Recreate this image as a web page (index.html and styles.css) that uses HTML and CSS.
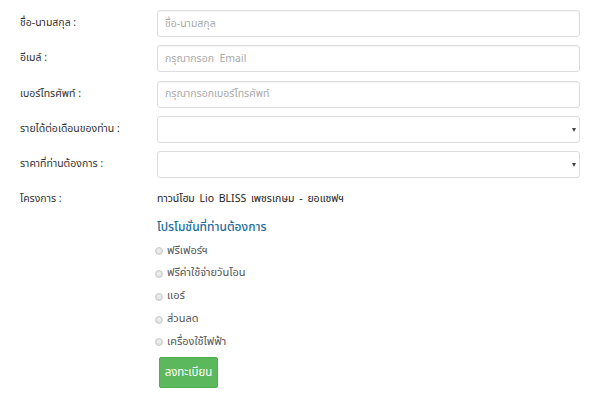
FILE: index.html
```html
<!DOCTYPE html>
<html lang="th">
<head>
    <meta charset="UTF-8">
    <meta name="viewport" content="width=device-width, initial-scale=1.0">
    <title>ลงทะเบียน</title>
    <link rel="stylesheet" href="styles.css">
</head>
<body>
    <form class="register-form">
        <div class="form-row">
            <label for="name">ชื่อ-นามสกุล :</label>
            <input type="text" id="name" placeholder="ชื่อ-นามสกุล">
        </div>
        <div class="form-row">
            <label for="email">อีเมล์ :</label>
            <input type="email" id="email" placeholder="กรุณากรอก  Email">
        </div>
        <div class="form-row">
            <label for="phone">เบอร์โทรศัพท์ :</label>
            <input type="text" id="phone" placeholder="กรุณากรอกเบอร์โทรศัพท์">
        </div>
        <div class="form-row">
            <label for="income">รายได้ต่อเดือนของท่าน :</label>
            <div class="select-wrap">
                <select id="income"><option></option></select>
                <span class="select-arrow"></span>
            </div>
        </div>
        <div class="form-row">
            <label for="price">ราคาที่ท่านต้องการ :</label>
            <div class="select-wrap">
                <select id="price"><option></option></select>
                <span class="select-arrow"></span>
            </div>
        </div>
        <div class="form-row">
            <label>โครงการ :</label>
            <div class="project-name">ทาวน์โฮม Lio BLISS เพชรเกษม - ยอแซฟฯ</div>
        </div>

        <div class="promo">
            <h3 class="promo-title">โปรโมชั่นที่ท่านต้องการ</h3>
            <label class="radio"><input type="radio" name="promo"> ฟรีเฟอร์ฯ</label>
            <label class="radio"><input type="radio" name="promo"> ฟรีค่าใช้จ่ายวันโอน</label>
            <label class="radio"><input type="radio" name="promo"> แอร์</label>
            <label class="radio"><input type="radio" name="promo"> ส่วนลด</label>
            <label class="radio"><input type="radio" name="promo"> เครื่องใช้ไฟฟ้า</label>
            <button type="submit" class="submit-btn">ลงทะเบียน</button>
        </div>
    </form>
</body>
</html>
```

FILE: styles.css
```css
body {
    margin: 0;
    background: #fff;
    font-family: "Noto Sans Thai", "Noto Sans", "DejaVu Sans", sans-serif;
    color: #333;
    font-size: 10.5px;
}

.register-form {
    padding: 10px 20px 0 20px;
    width: 560px;
}

.form-row {
    display: flex;
    align-items: center;
    height: 27px;
    margin-bottom: 8.3px;
}

.form-row > label {
    width: 137px;
    flex: none;
    line-height: 16px;
    margin-top: -1px;
}

.form-row input,
.select-wrap {
    width: 423px;
    height: 27px;
    box-sizing: border-box;
}

.form-row input {
    border: 1px solid #ddd;
    border-radius: 3px;
    padding: 0 7px;
    font-family: inherit;
    font-size: 10.5px;
    color: #555;
    box-shadow: inset 0 1px 1px rgba(0, 0, 0, 0.04);
}

.form-row input::placeholder {
    color: #aaa;
}

.select-wrap {
    position: relative;
}

.select-wrap select {
    appearance: none;
    -webkit-appearance: none;
    width: 100%;
    height: 100%;
    border: 1px solid #ddd;
    border-radius: 3px;
    background: #fff;
}

.select-arrow {
    position: absolute;
    right: 4px;
    top: 12px;
    border-left: 2.5px solid transparent;
    border-right: 2.5px solid transparent;
    border-top: 4px solid #444;
}

.project-name {
    color: #222;
    word-spacing: 2px;
    line-height: 16px;
    margin-top: -2px;
}

.promo {
    padding-left: 137px;
    margin-top: -4px;
}

.promo-title {
    margin: 0 0 3px 0;
    font-size: 12px;
    line-height: 18px;
    font-weight: 500;
    color: #1c6d9c;
}

.radio {
    display: flex;
    align-items: center;
    height: 22.8px;
    color: #555;
    font-size: 11px;
}

.radio input {
    width: 8px;
    height: 8px;
    margin: 2px 4px 0 -2px;
    appearance: none;
    -webkit-appearance: none;
    border-radius: 50%;
    border: 1px solid #ccc;
    background: radial-gradient(circle at 50% 40%, #f2f2f2, #d4d4d4);
}

.submit-btn {
    margin: 4px 0 0 2px;
    width: 59px;
    height: 31px;
    border: 1px solid #4cae4c;
    border-radius: 2px;
    background: #5cb85c;
    color: #fff;
    font-family: inherit;
    font-size: 11.5px;
    padding: 0;
}
```
